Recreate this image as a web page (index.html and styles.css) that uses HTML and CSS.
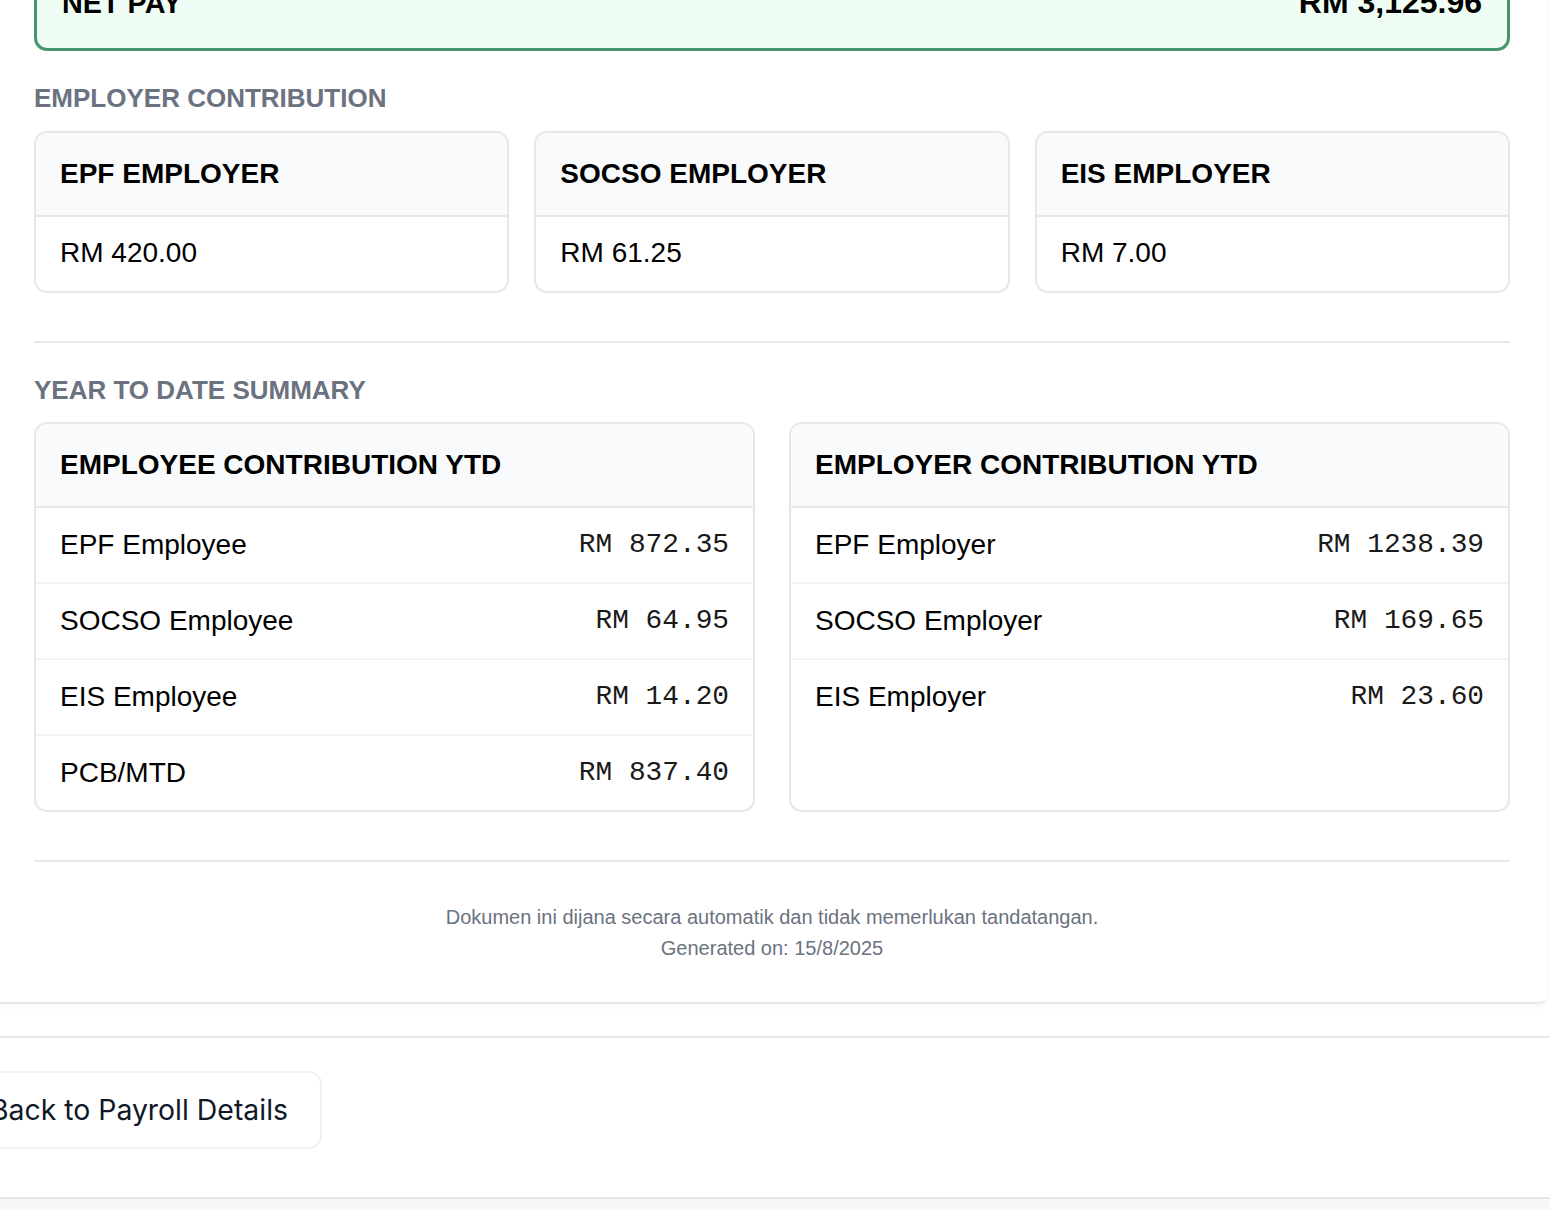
FILE: index.html
```html
<!DOCTYPE html>
<html lang="en">
<head>
<meta charset="utf-8">
<title>Payslip</title>
<link rel="stylesheet" href="styles.css">
</head>
<body>
<div class="page">
  <div class="sheet">
    <div class="netpay">
      <span class="netpay-label">NET PAY</span>
      <span class="netpay-amount">RM 3,125.96</span>
    </div>

    <section class="block">
      <h3 class="block-title">EMPLOYER CONTRIBUTION</h3>
      <div class="grid3">
        <div class="card">
          <div class="card-head">EPF EMPLOYER</div>
          <div class="card-body">RM 420.00</div>
        </div>
        <div class="card">
          <div class="card-head">SOCSO EMPLOYER</div>
          <div class="card-body">RM 61.25</div>
        </div>
        <div class="card">
          <div class="card-head">EIS EMPLOYER</div>
          <div class="card-body">RM 7.00</div>
        </div>
      </div>
    </section>

    <hr class="rule">

    <section class="block">
      <h3 class="block-title">YEAR TO DATE SUMMARY</h3>
      <div class="grid2">
        <div class="card">
          <div class="card-head">EMPLOYEE CONTRIBUTION YTD</div>
          <div class="row"><span>EPF Employee</span><span class="mono">RM 872.35</span></div>
          <div class="row"><span>SOCSO Employee</span><span class="mono">RM 64.95</span></div>
          <div class="row"><span>EIS Employee</span><span class="mono">RM 14.20</span></div>
          <div class="row"><span>PCB/MTD</span><span class="mono">RM 837.40</span></div>
        </div>
        <div class="card">
          <div class="card-head">EMPLOYER CONTRIBUTION YTD</div>
          <div class="row"><span>EPF Employer</span><span class="mono">RM 1238.39</span></div>
          <div class="row"><span>SOCSO Employer</span><span class="mono">RM 169.65</span></div>
          <div class="row"><span>EIS Employer</span><span class="mono">RM 23.60</span></div>
        </div>
      </div>
    </section>

    <hr class="rule">

    <footer class="doc-foot">
      <p>Dokumen ini dijana secara automatik dan tidak memerlukan tandatangan.</p>
      <p>Generated on: 15/8/2025</p>
    </footer>
  </div>

  <div class="actions">
    <div class="actions-inner">
      <button class="btn" type="button">
        <svg class="btn-icon" width="28" height="28" viewBox="0 0 24 24" fill="none" stroke="currentColor" stroke-width="2" stroke-linecap="round" stroke-linejoin="round"><path d="M19 12H5"/><path d="M12 19l-7-7 7-7"/></svg>
        <span>Back to Payroll Details</span>
      </button>
    </div>
  </div>
  <div class="bottom-bar"></div>
</div>
</body>
</html>
```

FILE: styles.css
```css
* { box-sizing: border-box; }

html, body {
  margin: 0;
  padding: 0;
  background: #ffffff;
}

body {
  font-family: "Liberation Sans", Arial, sans-serif;
  color: #000;
  overflow: hidden;
  height: 1210px;
}

.page {
  margin-top: -46px;
}

.sheet {
  width: 1550px;
  margin-left: -3px;
  padding: 0 37px 39px 37px;
  background: #fff;
  border-bottom: 2px solid #e6e7ea;
  border-bottom-right-radius: 8px;
  box-shadow: 0 3px 5px rgba(0, 0, 0, 0.035);
}

.netpay {
  display: flex;
  justify-content: space-between;
  align-items: baseline;
  background: #f0fdf4;
  border: 3px solid #45966a;
  border-radius: 13px;
  padding: 27px 25px;
  line-height: 36px;
  font-weight: 700;
}

.netpay-label {
  font-size: 28.8px;
}

.netpay-amount {
  font-size: 32px;
}

.block {
  margin-top: 32px;
}

.block-title {
  margin: 0 0 17px 0;
  font-size: 26px;
  line-height: 30.7px;
  font-weight: 700;
  color: #6b7280;
}

.grid3 {
  display: grid;
  grid-template-columns: repeat(3, 1fr);
  gap: 25px;
}

.grid2 {
  display: grid;
  grid-template-columns: repeat(2, 1fr);
  gap: 34px;
  align-items: stretch;
}

.card {
  border: 2px solid #e5e7eb;
  border-radius: 13px;
  overflow: hidden;
  background: #fff;
}

.card-head {
  background: #f9fafb;
  border-bottom: 2px solid #e5e7eb;
  padding: 24px;
  font-size: 28px;
  line-height: 34px;
  font-weight: 700;
}

.card-body {
  padding: 19px 24px 21px;
  font-size: 28px;
  line-height: 34px;
}

.row {
  display: flex;
  justify-content: space-between;
  align-items: center;
  padding: 20px 24px;
  font-size: 28px;
  line-height: 34px;
  border-bottom: 2px solid #f3f4f6;
}

.row:last-child {
  border-bottom: none;
}

.mono {
  font-family: "Liberation Mono", "Courier New", monospace;
  font-size: 27.8px;
  color: #1a1a1a;
}

.rule {
  margin: 48px 0 0 0;
  border: 0;
  border-top: 2px solid #e5e7eb;
  height: 0;
}

.doc-foot {
  margin-top: 40px;
  text-align: center;
  color: #6b7280;
  font-size: 20px;
  line-height: 30.5px;
}

.doc-foot p {
  margin: 0;
}

.actions {
  margin-top: 32px;
  border-top: 2px solid #e5e7eb;
  border-bottom: 2px solid #e5e7eb;
  padding: 33px 0 48px 0;
  background: #fff;
}

.actions-inner {
  width: 322px;
  display: flex;
  justify-content: flex-end;
}

.btn {
  flex-shrink: 0;
  display: flex;
  align-items: center;
  gap: 12px;
  height: 78px;
  padding: 20px 32px 20px 33px;
  background: #fff;
  border: 2px solid #f0f1f3;
  border-radius: 13px;
  font-family: Inter, "Liberation Sans", sans-serif;
  font-size: 28.4px;
  line-height: 34px;
  font-weight: 400;
  color: #111827;
}

.btn-icon {
  flex-shrink: 0;
}

.bottom-bar {
  height: 40px;
  background: #f6f7f9;
}
```
